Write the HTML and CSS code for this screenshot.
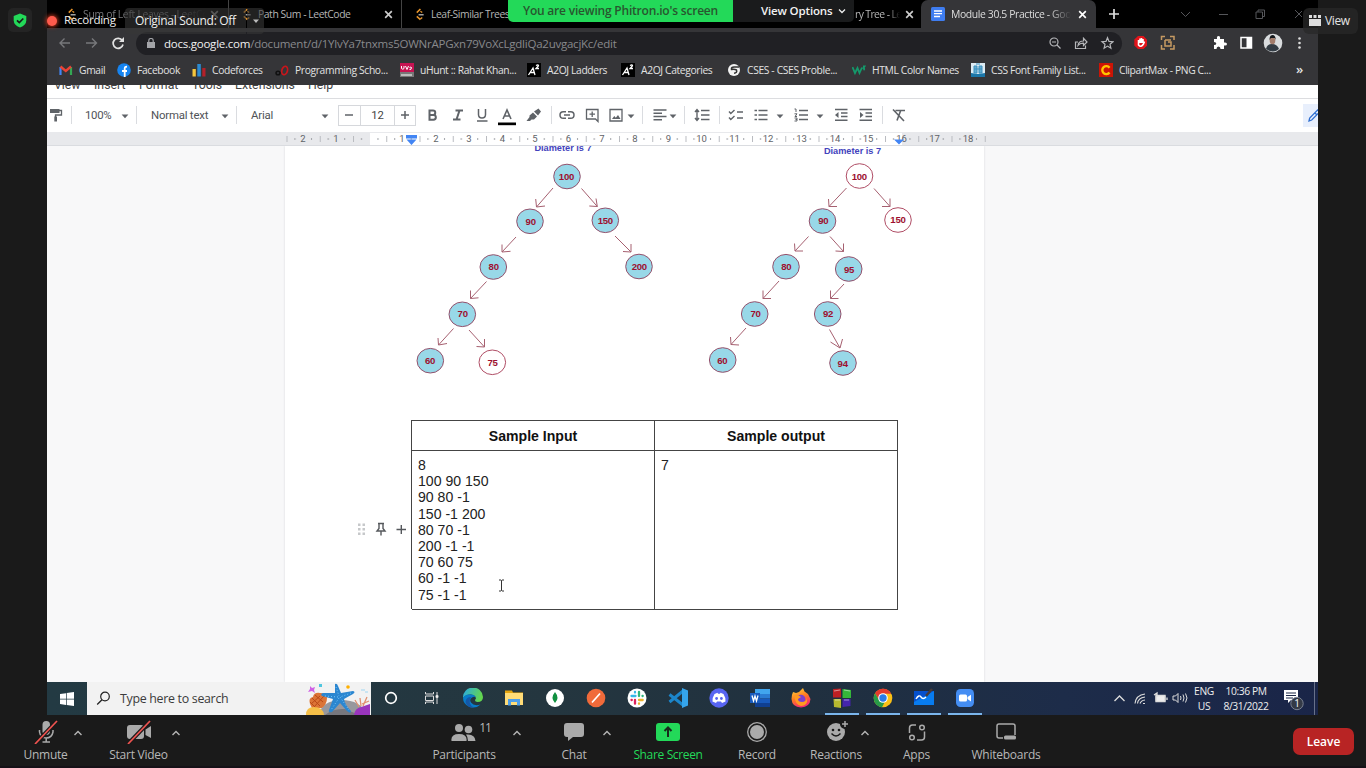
FILE: index.html
```html
<!DOCTYPE html>
<html lang="en">
<head>
<meta charset="utf-8">
<title>Zoom Meeting</title>
<link rel="stylesheet" href="styles.css">
</head>
<body>
<svg class="defs" width="0" height="0">
  <defs>
    <symbol id="close" viewBox="0 0 10 10"><path d="M2 2l6 6M8 2l-6 6" fill="none" stroke="currentColor" stroke-width="1.5"/></symbol>
    <symbol id="leet" viewBox="0 0 12 14"><path d="M7 1L3 5M3 9l4 3.500" fill="none" stroke="#e6942b" stroke-width="1.7"/><path d="M7 3.500l2 1.300M7 12l2-1.800" stroke="#e6942b" stroke-width="1.500"/><path d="M5 7.300h5.500" stroke="#b3b3b3" stroke-width="1.500"/></symbol>
    <symbol id="up" viewBox="0 0 10 8"><path d="M1.500 6L5 2.500 8.500 6" fill="none" stroke="#b5b5b5" stroke-width="1.400"/></symbol>
    <symbol id="caret" viewBox="0 0 8 5"><path d="M.6.5h6.800L4 4.300z" fill="#5f6368"/></symbol>
    <symbol id="a2" viewBox="0 0 14 14"><path fill="#000" d="M0 0h14v14H0z"/><path d="M1.500 12L6 5l2 7M3.500 9.500h4M9 2.500q2.500-1.500 2.500.3L9 5.500h3" fill="none" stroke="#fff" stroke-width="1.300"/></symbol>
  </defs>
</svg>
<div class="meeting">
  <div class="stage">
    <aside class="gutter left"><div class="shield"><svg width="14" height="15" viewBox="0 0 14 15"><path fill="#23d959" d="M7 .5L13.300 3v4.500q0 4.500-6.300 7-6.300-2.500-6.300-7V3z"/><path d="M4 7.300l2.300 2.300L10.300 5.500" fill="none" stroke="#1a1a1a" stroke-width="1.700"/></svg></div></aside>

    <main class="shared">
      <div class="tabs">
        <div class="tab t1"><svg class="leet"><use href="#leet"/></svg><span class="title">Sum of Left Leaves - LeetCo</span><svg class="x"><use href="#close"/></svg></div>
        <div class="tab t2"><svg class="leet"><use href="#leet"/></svg><span class="title">Path Sum - LeetCode</span><svg class="x"><use href="#close"/></svg></div>
        <div class="tab t3"><svg class="leet"><use href="#leet"/></svg><span class="title">Leaf-Similar Trees</span></div>
        <div class="tab t4"><span class="title">ry Tree - Le</span><svg class="x"><use href="#close"/></svg></div>
        <div class="tab active"><svg width="14" height="14" viewBox="0 0 14 14"><rect width="14" height="14" rx="1.500" fill="#3f7df0"/><path d="M3 4h8M3 6.700h8M3 9.500h6" stroke="#fff" stroke-width="1.300"/></svg><span class="title">Module 30.5 Practice - Goo</span><svg class="x"><use href="#close"/></svg></div>
        <svg class="plus" width="12" height="12" viewBox="0 0 12 12"><path d="M6 1v10M1 6h10" stroke="#ddd" stroke-width="1.700"/></svg>
        <svg class="winctl" width="126" height="12" viewBox="0 0 126 12" fill="none" stroke="#55565a"><path d="M5 4l4.500 4.500L14 4M43 6.500h9M80 4h6.500v6.500H80zM82 4V2h6.500v6.500H87M119 2l8 8M127 2l-8 8"/></svg>
      </div>

      <div class="address">
        <svg width="66" height="14" viewBox="0 0 66 14" fill="none" stroke-width="1.400"><path d="M12 7H2M6.500 2.500L2 7l4.500 4.500M28 7h10.500M34 2.500L38.500 7 34 11.500" stroke="#77787b"/><path d="M64.300 4.500A5 5 0 1 0 65 8.500" stroke="#e2e2e2" stroke-width="1.700"/><path fill="#e2e2e2" d="M66 1v5h-5z"/></svg>
        <div class="omnibox">
          <svg width="8" height="10" viewBox="0 0 8 10"><path fill="#a3a4a8" d="M0 4h8v6H0z"/><path d="M1.800 4V2.500a2.200 2 0 0 1 4.400 0V4" fill="none" stroke="#a3a4a8" stroke-width="1.200"/></svg>
          <span class="url"><b>docs.google.com</b>/document/d/1YlvYa7tnxms5OWNrAPGxn79VoXcLgdliQa2uvgacjKc/edit</span>
          <svg width="66" height="14" viewBox="0 0 66 14" fill="none" stroke="#b6b7ba" stroke-width="1.200"><circle cx="6" cy="6" r="4"/><path d="M9 9l3.500 3.500M4 6h4M30 6H27.500v6.500h10V9.500M30 9.500q.5-4.500 5.500-4.500V2.300L39 6l-3.500 3.500V7.200Q32 7 30 9.500z"/><path d="M59.500 1.700l1.500 3.700 4 .3-3 2.600.9 4-3.400-2.200-3.400 2.200.9-4-3-2.600 4-.3z"/></svg>
        </div>
        <svg class="extensions" width="176" height="20" viewBox="0 0 176 20"><path fill="#e0151b" d="M5 3h5.500l3.500 3.700v6L10.500 16H5l-3.700-3.500v-6z"/><path d="M5.500 7v5q2.500 3 5-1l1-2.500M7 10V5.500M8.500 10V5M10 10V6" stroke="#fff" stroke-width="1.600" fill="none"/><path d="M28.500 7V3.500H32M37 3.500h4V7M41 12v4h-4M32 16h-3.500v-4M32 7h6M32 7v6h6V9h-3" fill="none" stroke="#c69a62" stroke-width="1.500"/><path fill="#fff" d="M81 6h3q-.5-3 1.500-3T87 6h4v3.500q3-.5 3 1.500t-3 1.500V16h-3.500q0-2.500-2-2.500t-2 2.500H81v-4q2.300 0 2.300-1.500T81 9z"/><path d="M108 4.500h10.500v10.500H108z" fill="none" stroke="#fff" stroke-width="1.500"/><path fill="#fff" d="M113.500 4.500h5v10.500h-5z"/><circle cx="140" cy="10" r="9.300" fill="#d9dcde"/><path fill="#333c44" d="M133 16q1-5 6-5t7 5q-6 5-13 0z"/><ellipse cx="139.500" cy="7.500" rx="2.800" ry="3.800" fill="#a27c6b"/><path fill="#15191d" d="M136.500 7q0-5 3-5t3.300 5l-1-2h-4z"/><g fill="#ddd"><circle cx="166.500" cy="5.500" r="1.300"/><circle cx="166.500" cy="10" r="1.300"/><circle cx="166.500" cy="14.500" r="1.300"/></g></svg>
      </div>

      <div class="bookmarks">
        <div class="bm b1"><svg viewBox="0 0 14 14"><path d="M1.500 12V4" stroke="#4285f4" stroke-width="2.200"/><path d="M12 12V4" stroke="#34a853" stroke-width="2.200"/><path d="M1.500 3.500L6.800 8 12 3.500" fill="none" stroke="#ea4335" stroke-width="2.400"/></svg>Gmail</div>
        <div class="bm b2"><svg viewBox="0 0 14 14"><circle cx="7" cy="7" r="6.800" fill="#1684f0"/><path d="M7.700 14V5.500q0-2 2.300-1.700M5 8h5" fill="none" stroke="#fff" stroke-width="1.800"/></svg>Facebook</div>
        <div class="bm b3"><svg viewBox="0 0 14 14"><path fill="#f5c63c" d="M.5 6h3.300v7.500H.5z"/><path fill="#2b8bd2" d="M5.300 1h3.500v12.500H5.300z"/><path fill="#b4202a" d="M10.300 5h3.200v8.500h-3.200z"/></svg>Codeforces</div>
        <div class="bm b4"><svg viewBox="0 0 14 14" fill="none"><ellipse cx="3" cy="10" rx="2" ry="1.800" stroke="#111" stroke-width="1.500"/><ellipse cx="9.800" cy="7.500" rx="2.800" ry="4.300" transform="rotate(15 9.800 7)" stroke="#c9151b" stroke-width="1.700"/></svg>Programming Scho...</div>
        <div class="bm b5"><svg viewBox="0 0 14 14"><path fill="#c71352" d="M0 0h14v9H0z"/><path fill="#777" d="M0 9h14v5H0z"/><path d="M1.500 3v2.500q1.500 1.500 2.500 0V3M5.500 3l1.500 3.500L8.500 3M9.500 6.500q2 .5 2-2 0-1-2 0M1 12h11" fill="none" stroke="#fff" stroke-width="1"/></svg>uHunt :: Rahat Khan...</div>
        <div class="bm b6"><svg><use href="#a2"/></svg>A2OJ Ladders</div>
        <div class="bm b7"><svg><use href="#a2"/></svg>A2OJ Categories</div>
        <div class="bm b8"><svg viewBox="0 0 14 14"><circle cx="7" cy="7" r="6" fill="#f3f3f3"/><path d="M12 4H7Q4 4 4.500 6.500q3-.5 5 .5 1 3-2.500 3.300" fill="none" stroke="#333" stroke-width="1.500"/></svg>CSES - CSES Proble...</div>
        <div class="bm b9"><svg viewBox="0 0 14 14"><path d="M.5 4l2.500 6 2.500-5 2 5L10 4.500M11 3.500h1.500l-1 1.500q1.500 1 0 2" fill="none" stroke="#14996b" stroke-width="1.800"/></svg>HTML Color Names</div>
        <div class="bm b10"><svg viewBox="0 0 14 14"><path fill="#dcebf3" d="M0 0h14v14H0z"/><path fill="#1b76a8" d="M0 10l7 1 7-1v4H0z"/><path d="M3 3h3v7H3zM8 3h3v7H8zM3 6h8M5 1h4" fill="#63acd0" stroke="#3c8fbd"/></svg>CSS Font Family List...</div>
        <div class="bm b11"><svg viewBox="0 0 14 14"><path fill="#cc1406" d="M0 0h14v14H0z"/><path d="M10.500 4.700A4 4 0 1 0 10.500 9.500" fill="none" stroke="#ffc400" stroke-width="2.400"/></svg>ClipartMax - PNG C...</div>
        <span class="more">»</span>
      </div>

      <div class="docmenu"><span class="m1">View</span><span class="m2">Insert</span><span class="m3">Format</span><span class="m4">Tools</span><span class="m5">Extensions</span><span class="m6">Help</span></div>

      <div class="toolbar">
        <svg class="ic" viewBox="0 0 16 16"><path fill="#5f6368" d="M3 2h9.500v4H3z"/><path d="M12 3.500h2.500v4.500H8.500V10" fill="none" stroke="#5f6368" stroke-width="1.300"/><path fill="#5f6368" d="M7.300 9.500h2.700v5H7.300z"/></svg>
        <i class="sep g8"></i><span class="txt zoomv">100%</span><svg class="caret g8"><use href="#caret"/></svg>
        <i class="sep g7"></i><span class="txt stylev">Normal text</span><svg class="caret g12"><use href="#caret"/></svg>
        <i class="sep g7"></i><span class="txt fontv">Arial</span><svg class="caret g46"><use href="#caret"/></svg>
        <div class="size"><svg width="21" viewBox="0 0 21 20"><path d="M6 10h8" stroke="#5f6368" stroke-width="1.500"/></svg><span>12</span><svg width="20" viewBox="0 0 20 20"><path d="M6 10h8M10 6v8" stroke="#5f6368" stroke-width="1.500"/></svg></div>
        <svg class="ic g8" viewBox="0 0 16 16"><path d="M5.500 3.500H9a2.200 2.200 0 0 1 0 4.500H5.500zM5.500 8h4a2.300 2.300 0 0 1 0 4.700h-4z" fill="none" stroke="#5f6368" stroke-width="2"/></svg>
        <svg class="ic g10" viewBox="0 0 16 16"><path d="M5.500 3.500H13M3 12.500h7.500M9.500 3.500l-3 9" fill="none" stroke="#5f6368" stroke-width="2"/></svg>
        <svg class="ic g8" viewBox="0 0 16 16"><path d="M4.500 2v5.500q0 3.500 3.500 3.500t3.500-3.500V2M3 14h10.500" fill="none" stroke="#5f6368" stroke-width="1.500"/></svg>
        <svg class="ic wide g8" viewBox="0 0 18 20"><path d="M5 12L9 3l4 9M6.500 9h5" fill="none" stroke="#5f6368" stroke-width="1.600"/><path fill="#000" d="M0 15.500h19v2.700H0z"/></svg>
        <svg class="ic g10" viewBox="0 0 16 16"><path fill="#5f6368" d="M8 4.500l4 4 3-4L12.500 1.500zM7 5.500l4 4-3 3H5.500L4 14H.5l3-4V8.500z"/></svg>
        <i class="sep g9"></i>
        <svg class="ic g7" viewBox="0 0 16 16"><path d="M7 4.700H4.300a3.300 3.300 0 0 0 0 6.600H7M9 4.700h2.700a3.300 3.300 0 0 1 0 6.600H9M5 8h6" fill="none" stroke="#5f6368" stroke-width="1.500"/></svg>
        <svg class="ic g9" viewBox="0 0 16 16"><path d="M2.500 2.500h11.500v12l-2.500-2.500H2.500zM8.200 4.500v5.500M5.500 7.200H11" fill="none" stroke="#5f6368" stroke-width="1.300"/></svg>
        <svg class="ic g8" viewBox="0 0 16 16"><path d="M2 2.500h12v11.500H2z" fill="none" stroke="#5f6368" stroke-width="1.300"/><path fill="#5f6368" d="M4 12l2.300-3 1.500 1.700L10 8l2.500 4z"/></svg>
        <svg class="caret g3"><use href="#caret"/></svg><i class="sep g7"></i>
        <svg class="ic g9" viewBox="0 0 16 16"><path d="M1.500 3h13M1.500 6.200h8.500M1.500 9.500h13M1.500 12.800h8.500" stroke="#5f6368" stroke-width="1.400"/></svg>
        <svg class="caret g1"><use href="#caret"/></svg><i class="sep g7"></i>
        <svg class="ic g9" viewBox="0 0 16 16"><path d="M7 3.500h8.500M7 8h8.500M7 12.500h8.500M3 2.500v11M1 5l2-2.500L5 5M1 11l2 2.500L5 11" fill="none" stroke="#5f6368" stroke-width="1.400"/></svg>
        <i class="sep g9"></i>
        <svg class="ic g8" viewBox="0 0 16 16"><path d="M9 5h6M9 11h6M1 4.500l1.800 2L6.500 3M1 10.500l1.800 2L6.500 9" fill="none" stroke="#5f6368" stroke-width="1.400"/></svg>
        <svg class="ic g9" viewBox="0 0 16 16"><path d="M5.500 3.500h9M5.500 8h9M5.500 12.500h9M1.500 3.500H4M1.500 8H4M1.500 12.500H4" stroke="#5f6368" stroke-width="1.700"/></svg>
        <svg class="caret g7"><use href="#caret"/></svg>
        <svg class="ic g9" viewBox="0 0 16 16"><path d="M6 3.500h9M6 8h9M6 12.500h9" stroke="#5f6368" stroke-width="1.500"/><path d="M1.500 2H3v3M1.500 6.800H4L2 9.500h2M1.500 11H4v3H1.500M2.500 12.500H4" fill="none" stroke="#5f6368"/></svg>
        <svg class="caret g7"><use href="#caret"/></svg>
        <svg class="ic g9" viewBox="0 0 16 16"><path d="M2 2.500h12.500M8 6h6.500M8 9.500h6.500M2 13.200h12.500" stroke="#5f6368" stroke-width="1.400"/><path fill="#5f6368" d="M5.500 5v6L2 8z"/></svg>
        <svg class="ic g9" viewBox="0 0 16 16"><path d="M1.500 2.500H14M7.500 6H14M7.500 9.500H14M1.500 13.200H14" stroke="#5f6368" stroke-width="1.400"/><path fill="#5f6368" d="M2 5v6l3.500-3z"/></svg>
        <i class="sep g8"></i>
        <svg class="ic g8" viewBox="0 0 16 16"><path d="M4.500 3.500H14M9.500 4L6 13.500M2 2.500l11 11.500" fill="none" stroke="#5f6368" stroke-width="1.600"/></svg>
        <div class="editmode"><svg width="15" height="23" viewBox="0 0 15 23"><path d="M6 17l.7-3 8-8 2 2-8 8zM12 9l2 2" fill="none" stroke="#2f6fd0" stroke-width="1.300"/></svg></div>
      </div>

      <div class="ruler">
        <svg width="1271" height="14" viewBox="47 132 1271 14">
          <defs><pattern id="ticks" x="286.500" y="132" width="33.250" height="14" patternUnits="userSpaceOnUse"><path d="M.5 4v6" stroke="#b9bbc0"/><path d="M8.500 6v2M25 6v2" stroke="#a0a2a7"/></pattern></defs>
          <path fill="#fff" d="M370 133h532v12H370z"/><path fill="url(#ticks)" d="M286 132h700v14H286z"/>
          <g class="nums"><text x="303" y="142">2</text><text x="336" y="142">1</text><text x="402" y="142">1</text><text x="436" y="142">2</text><text x="469" y="142">3</text><text x="502.500" y="142">4</text><text x="535" y="142">5</text><text x="568.500" y="142">6</text><text x="602" y="142">7</text><text x="635" y="142">8</text><text x="668.500" y="142">9</text><text x="701.500" y="142">10</text><text x="734.500" y="142">11</text><text x="768" y="142">12</text><text x="801.500" y="142">13</text><text x="835" y="142">14</text><text x="868" y="142">15</text><text x="901.500" y="142">16</text><text x="934.500" y="142">17</text><text x="968" y="142">18</text></g>
          <path fill="#4285f4" d="M406 135h11v3.500h-11zM406.500 139.500h10L411.500 145zM894 139.500h10l-5 5z"/>
        </svg>
      </div>

      <div class="canvas">
        <div class="page">
          <svg class="trees" width="699" height="274" viewBox="285 146 699 274">
            <g class="caption"><text x="563" y="151">Diameter is 7</text><text x="852.500" y="154">Diameter is 7</text></g>
            <g class="arrows">
              <path d="M553 188l-16.500 19m-.8-8l.8 8 8.500-1M581.500 188.500l15.800 18m-1.300-8l1.300 8-8-.5M516 237l-14 15m0-7.500v7.500l8.500-.7M615 236l16 16m0-8v8l-8-.5M486.500 281.500l-16 17m0-8v8l8-.7M453.500 328.500l-15 16.500m-.5-7l.5 7 8.500-1.500M469 330l15.500 17m0-8v8l-8-.5"/>
              <path d="M846.500 188l-17.500 18.500m-.5-7.500l.5 7.500h8M874 188.500l16 18m0-8v8h-8M808.500 236.500L795 251m-.5-7.500l.5 7.500h8M830 236.500l13.500 15m0-8v8l-8-.5M779 281l-16 17.500m0-8v8h8M844 284l-13.500 14.500m0-8v8h8M746 328l-15 16.500m-.5-7.500l.5 7.500 8 .5M829.500 329.500l10.500 18.500m-9.500-6l9.500 6 2.500-9"/>
            </g>
            <g class="nodes">
              <ellipse cx="567" cy="176.500" rx="13.300" ry="12.300"/><ellipse cx="530" cy="221.300" rx="13.300" ry="12.300"/><ellipse cx="605.300" cy="220.300" rx="13.300" ry="12.300"/><ellipse cx="493.300" cy="267" rx="13.300" ry="12.300"/><ellipse cx="639" cy="266.500" rx="13.300" ry="12.300"/><ellipse cx="462.300" cy="314.300" rx="13.300" ry="12.300"/><ellipse cx="430.300" cy="360.700" rx="13.300" ry="12.300"/><ellipse class="open" cx="492.300" cy="362.300" rx="13.300" ry="12.300"/>
              <ellipse class="open" cx="859.500" cy="176" rx="13.300" ry="12.300"/><ellipse cx="822.500" cy="221" rx="13.300" ry="12.300"/><ellipse class="open" cx="898" cy="220" rx="13.300" ry="12.300"/><ellipse cx="786" cy="266.700" rx="13.300" ry="12.300"/><ellipse cx="848.700" cy="269" rx="13.300" ry="12.300"/><ellipse cx="754.700" cy="314" rx="13.300" ry="12.300"/><ellipse cx="827.700" cy="314" rx="13.300" ry="12.300"/><ellipse cx="722.700" cy="360" rx="13.300" ry="12.300"/><ellipse cx="843" cy="363" rx="13.300" ry="12.300"/>
              <text x="566.500" y="180">100</text><text x="530.700" y="224.500">90</text><text x="605.300" y="224">150</text><text x="493.700" y="270">80</text><text x="639.300" y="269.700">200</text><text x="462.700" y="317">70</text><text x="430" y="364">60</text><text x="492.500" y="365.500">75</text>
              <text x="859.300" y="179.500">100</text><text x="823.300" y="224">90</text><text x="898" y="223.300">150</text><text x="786.300" y="269.700">80</text><text x="849" y="272.500">95</text><text x="755.500" y="316.500">70</text><text x="828" y="316.500">92</text><text x="722.300" y="363.500">60</text><text x="842.700" y="366.500">94</text>
            </g>
          </svg>
          <div class="sample">
            <div class="cell head">Sample Input</div><div class="cell head">Sample output</div>
            <div class="cell">8<br>100 90 150<br>90 80 -1<br>150 -1 200<br>80 70 -1<br>200 -1 -1<br>70 60 75<br>60 -1 -1<br>75 -1 -1</div><div class="cell">7</div>
          </div>
          <svg class="rowtools" width="50" height="16" viewBox="0 0 50 16"><g fill="#c6c8ca"><path d="M1 2.500h2.500V5H1zM5.500 2.500H8V5H5.500zM1 7h2.500v2.500H1zM5.500 7H8v2.500H5.500zM1 11.500h2.500V14H1zM5.500 11.500H8V14H5.500z"/></g><path d="M21 2.500h6M22 2.500v5l-2 2.500h8l-2-2.500v-5M24 10v4.500M39.500 8.500h9.500M44.300 4v9" fill="none" stroke="#55585c" stroke-width="1.400"/></svg>
          <svg class="ibeam" width="7" height="13" viewBox="0 0 7 13"><path d="M1 1h2l.5.500L4 1h2M3.500 1.500v10M1 12h2l.5-.5.5.5h2" fill="none" stroke="#333"/></svg>
        </div>
      </div>

      <div class="taskbar">
        <div class="start"><svg width="14" height="14" viewBox="0 0 14 14"><path fill="#fff" d="M0 2l6-.8v5.500H0zM6.700 1.100L14 0v6.700H6.700zM0 7.400h6v5.500L0 12zM6.700 7.400H14V14l-7.300-1z"/></svg></div>
        <div class="search"><svg width="15" height="15" viewBox="0 0 15 15"><circle cx="9" cy="5.500" r="4.300" fill="none" stroke="#222" stroke-width="1.200"/><path d="M6 8.800L1.200 13.500" stroke="#222" stroke-width="1.300"/></svg><span>Type here to search</span>
          <svg class="reef" width="66" height="33" viewBox="0 0 66 33"><path fill="#98989d" d="M14 33q2-14 22-15 20 0 26 15z"/><path fill="#77777d" d="M20 33q8-7 20-6l14 6z"/><path fill="#dc7436" d="M5 22q-2-6 3-7 1-5 7-4 7 0 7 5 0 6-5 10H7z"/><path d="M7 16l8 8M10 13l8 7M5 20l6 6M15 14L6 22M19 14L9 25" stroke="#b94a17"/><path fill="#f5bf48" d="M1 33q0-8 8-8 9 0 10 8z"/><path fill="#9a35bd" d="M49 33q1-7 7-8l9-3v11z"/><path d="M54 25l-4-7M56 24l-1-8M58 24l4-9M57 22l7-3" stroke="#e09070" stroke-width="1.300" fill="none"/><path fill="#2b86d0" d="M30 2q2-1 3 2l3 7 12-2q3 1 0 3l-9 5q1 6 7 12 0 3-4 0l-7-8-8 9q-4 1-3-2l4-11-11-3q-2-2 1-3l12 0z"/><path d="M31 5l3 9M46 11l-11 4 9 13M34 16l-8 12M33 15l-13-1" stroke="#73c5fa" stroke-dasharray="1 2" fill="none"/><path fill="#cf62e4" d="M5 4l2 2 3-1-1 3 1 3-3-2-4 1 2-3z"/><path fill="#4fc6df" d="M14 2h3v3h-3z"/><circle cx="43" cy="5" r="1.800" fill="#ffb000"/><path fill="#c8e4f2" d="M56 7h4v2h-4zM60 9h3v2h-3z"/></svg>
        </div>
        <div class="app"><svg viewBox="0 0 20 20"><circle cx="10" cy="10" r="5.300" fill="none" stroke="#fff" stroke-width="1.700"/></svg></div>
        <div class="app"><svg viewBox="0 0 20 20" fill="none" stroke="#ddd"><path d="M3.500 4v2h8V4M3.500 16v-2h8v2M3.500 8h8v4.500h-8zM15 4v3M15 10v6"/><path d="M14 7.500h2v2h-2z" fill="#fff"/></svg></div>
        <div class="app"><svg viewBox="0 0 20 20"><defs><linearGradient id="edge1" x2="1" y2=".3"><stop stop-color="#28a8e8"/><stop offset="1" stop-color="#62d64f"/></linearGradient></defs><path fill="url(#edge1)" d="M0 10A10 10 0 0 1 20 9q0 5-5.500 5-4-.5-1.500-3.500Q12.500 7 8 6.500 3 6 0 10z"/><path fill="#087cc9" d="M0 10q2-4 7-3.500Q12 6 13 10q-1-2-4-.5-3 2-1 5 3 4 9.500 2Q13 21 6.500 19 0 16 0 10z"/><path fill="#1557a6" d="M8 9q-4 7 3 10.500Q4 20 2.500 14 3 9 8 9z"/></svg></div>
        <div class="app"><svg viewBox="0 0 20 20"><path fill="#e5a50f" d="M1 2.500h7l1 2h10v3H1z"/><path fill="#ffdc77" d="M1 5h18v12H1z"/><path fill="#4e9ee8" d="M4 11h12v6.500h-3V14H7v3.500H4z"/></svg></div>
        <div class="app"><svg viewBox="0 0 20 20"><circle cx="10" cy="10" r="9" fill="#fff"/><path fill="#10903f" d="M10 4q5 6 0 11-5-5 0-11z"/></svg></div>
        <div class="app"><svg viewBox="0 0 20 20"><circle cx="10" cy="10" r="9.300" fill="#f06a3a"/><path d="M6 14.500l8-9" stroke="#fff" stroke-width="1.700"/></svg></div>
        <div class="app"><svg viewBox="0 0 20 20"><circle cx="10" cy="10" r="9.500" fill="#fff"/><g fill="none" stroke-width="2.300" stroke-linecap="round"><path d="M4.500 8h4M8 4v.5" stroke="#36b8e8"/><path d="M12 4v4M15.500 8h.2" stroke="#2fb67d"/><path d="M12 12h3.700M12 15.500v.3" stroke="#ecb32e"/><path d="M8 12v3.700M4.500 12h.3" stroke="#dc235a"/></g></svg></div>
        <div class="app"><svg viewBox="0 0 20 20"><path d="M15 3L1.500 14M15 17L1.500 6.500" stroke="#1c86cb" stroke-width="3"/><path fill="#35a5ec" d="M14 0l6 2.500v15L14 20z"/></svg></div>
        <div class="app"><svg viewBox="0 0 20 20"><circle cx="10" cy="10" r="9.700" fill="#5865f2"/><path fill="#fff" d="M5.500 6l3-1.200.5 1h2l.5-1 3 1.200Q17 10 16.500 13.500L13 15l-1-1.500H8L7 15l-3.500-1.500Q3 10 5.500 6z"/><circle cx="7.600" cy="10.500" r="1.400" fill="#5865f2"/><circle cx="12.400" cy="10.500" r="1.400" fill="#5865f2"/></svg></div>
        <div class="app"><svg viewBox="0 0 20 20"><path fill="#41a5ee" d="M5 1h15v5H5z"/><path fill="#2b7cd3" d="M5 6h15v4.500H5z"/><path fill="#185abd" d="M5 10.500h15V15H5z"/><path fill="#103f91" d="M5 15h15v4H5z"/><path fill="#185abd" d="M0 5h10v10H0z"/><path d="M2 7.500L3.500 13 5 8l1.500 5L8 7.500" fill="none" stroke="#fff" stroke-width="1.300"/></svg></div>
        <div class="app"><svg viewBox="0 0 20 20"><defs><linearGradient id="fox" x2=".4" y2="1"><stop stop-color="#ffe03d"/><stop offset=".55" stop-color="#ff7b22"/><stop offset="1" stop-color="#f52c70"/></linearGradient></defs><path fill="url(#fox)" d="M2 4l3 1 3-1 4-4 1.500 3.500L17 6l2.500 5Q19 19 10 19.500 1 19 .5 11 .5 7 2 4z"/><circle cx="10" cy="11" r="4.300" fill="#7940cf"/><path fill="#ff9a21" d="M3 7q5 0 7 2l-3 2q0 3 4 3 4 0 5-4 1 8-6 8-6-1-7-11z"/></svg></div>
        <div class="app open"><svg viewBox="0 0 20 20"><path fill="#bd2023" d="M1 1l8-.5v9H1z"/><path fill="#35b73a" d="M10.500 1L19 2v8h-8.500z"/><path fill="#b7b82f" d="M1.500 11H9v9l-7-1z"/><path fill="#4525ac" d="M10.500 11H18.500v7l-8 1z"/><path d="M2 3l6-1M12 2l6 1M3 12h5M12 12h5" stroke="#fff" stroke-opacity=".5"/></svg></div>
        <div class="app open"><svg viewBox="0 0 20 20"><circle cx="10" cy="10" r="9.300" fill="#fbc116"/><path fill="#e33b2e" d="M2 5.300A9.300 9.300 0 0 1 18.200 5.700H10L6 12z"/><path fill="#289b48" d="M2 5.300L6 12l5.500 2.500L9 19.300A9.300 9.300 0 0 1 2 5.300z"/><circle cx="10" cy="10" r="4.800" fill="#fff"/><circle cx="10" cy="10" r="3.700" fill="#297be8"/></svg></div>
        <div class="app open"><svg viewBox="0 0 20 20"><path fill="#087cf0" d="M0 3h20v14H0z"/><path fill="#0550cd" d="M0 3h20L0 14z"/><path d="M2 11q3-5 5-2t5 0" fill="none" stroke="#fff" stroke-width="1.400"/><path d="M12 8l6-7" stroke="#483b39" stroke-width="2.500"/></svg></div>
        <div class="app open"><svg viewBox="0 0 20 20"><rect x="1" y="1" width="18" height="18" rx="4.500" fill="#448df3"/><rect x="4" y="6.500" width="8" height="7" rx="1.500" fill="#fff"/><path fill="#fff" d="M12.500 9l3.500-2.300v6.700L12.500 11z"/></svg></div>
        <svg class="trayicons" width="76" height="16" viewBox="0 0 76 16" fill="none" stroke="#ddd"><path d="M1.500 11L6.500 6l5 5" stroke-width="1.300"/><path d="M22 13.500Q23 5 32 4M24.500 13.500Q25 8 32 7M27 13.500Q28 10.500 32 10M30 13.500h2" stroke-width="1.100"/><path d="M43 5.500h9v6h-9z" fill="#eee"/><path d="M43 5.500h9v6h-9zM54 7.500v2.500M41 5l3-2v4" stroke-width="1.300"/><path d="M60 6h2.500L65 3.500v9L62.500 10H60zM67.500 6q1 2 0 4M70 4.500q2 3.500 0 7M72.500 3.500q3 4.500 0 9"/></svg>
        <div class="lang">ENG<br>US</div><div class="clock">10:36 PM<br>8/31/2022</div>
        <div class="notice"><svg width="22" height="24" viewBox="0 0 22 24"><path fill="#fff" d="M1 2h14v10H8l-3 3v-3H1z"/><path d="M3 5h10M3 7.500h10M3 10h7" stroke="#1d2947"/><circle cx="14" cy="15.500" r="6.200" fill="#343a46" stroke="#788091"/><text x="14" y="19">1</text></svg></div>
        <i class="peek"></i>
      </div>

      <div class="sharebanner"><div class="viewing">You are viewing Phitron.io's screen</div><div class="options">View Options<svg width="8" height="6" viewBox="0 0 8 6"><path d="M1 1.500l3 3 3-3" fill="none" stroke="#eee" stroke-width="1.300"/></svg></div></div>
      <div class="status"><i class="recdot"></i><span class="rec">Recording</span><span class="sound">Original Sound: Off</span><span class="soundmenu"><svg width="8" height="5" viewBox="0 0 8 5"><path fill="#bbb" d="M1 .5h6L4 4z"/></svg></span></div>
    </main>

    <aside class="gutter"><div class="view"><svg width="12" height="11" viewBox="0 0 12 11"><path fill="#ddd" d="M0 4h12v7H0z"/><path fill="#ddd" d="M0 0h3v3H0zM4.500 0h3v3h-3zM9 0h3v3H9z"/></svg>View</div></aside>
  </div>

  <footer class="controls">
    <div class="ctl unmute"><svg width="24" height="24" viewBox="0 0 24 24"><rect x="8.500" y="1" width="7.500" height="14" rx="3.700" fill="#aaa"/><path d="M5.500 10v2q1 6 6.700 6T19 12v-2M12.200 18v3.500M8.500 22h7.500" fill="none" stroke="#aaa" stroke-width="1.500"/><path d="M1 24L23 1" stroke="#1a1a1a" stroke-width="4"/><path d="M1 24L23 1" stroke="#ef5350" stroke-width="1.700"/></svg><span>Unmute</span></div><svg class="up u1"><use href="#up"/></svg>
    <div class="ctl video"><svg width="26" height="24" viewBox="0 0 26 24"><rect x="1" y="5" width="17" height="14" rx="3" fill="#aaa"/><path fill="#aaa" d="M19.500 9.500L25 6v12l-5.500-3z"/><path d="M2 24L24 1" stroke="#1a1a1a" stroke-width="4"/><path d="M2 24L24 1" stroke="#ef5350" stroke-width="1.700"/></svg><span>Start Video</span></div><svg class="up u2"><use href="#up"/></svg>
    <div class="ctl people"><div class="peopleicon"><svg width="25" height="24" viewBox="0 0 25 24" fill="#aaa"><circle cx="8" cy="8" r="4"/><circle cx="17.500" cy="9.500" r="3.800"/><path d="M.5 21q-1-7 7.500-7t7.500 7z"/><path d="M15 14.500q9-1 9.500 6.500h-7.500q0-4-2-6.500z"/></svg><span>11</span></div><span>Participants</span></div><svg class="up u3"><use href="#up"/></svg>
    <div class="ctl chat"><svg width="22" height="24" viewBox="0 0 22 24"><path fill="#aaa" d="M4 3h14q3 0 3 3v8q0 3-3 3h-8l-5 4v-4H4q-3 0-3-3V6q0-3 3-3z"/></svg><span>Chat</span></div><svg class="up u4"><use href="#up"/></svg>
    <div class="ctl share"><svg width="24" height="24" viewBox="0 0 24 24"><rect y="3" width="24" height="18" rx="3" fill="#23d959"/><path d="M12 17V8M8.500 11L12 7.500l3.500 3.500" fill="none" stroke="#182b1c" stroke-width="2"/></svg><span>Share Screen</span></div>
    <div class="ctl record"><svg width="22" height="24" viewBox="0 0 22 24"><circle cx="11" cy="12" r="9.300" fill="none" stroke="#aaa" stroke-width="1.300"/><circle cx="11" cy="12" r="7" fill="#aaa"/></svg><span>Record</span></div>
    <div class="ctl react"><svg width="24" height="24" viewBox="0 0 24 24"><circle cx="12" cy="12" r="9" fill="#aaa"/><circle cx="21" cy="4" r="5" fill="#1a1a1a"/><path d="M21 1v6M18 4h6" stroke="#aaa" stroke-width="1.500"/><g fill="#1a1a1a"><circle cx="9" cy="10" r="1.300"/><circle cx="15" cy="10" r="1.300"/></g><path d="M7.500 13.500q4.500 5 9 0" fill="none" stroke="#1a1a1a" stroke-width="1.400"/></svg><span>Reactions</span></div><svg class="up u5"><use href="#up"/></svg>
    <div class="ctl apps"><svg width="20" height="24" viewBox="0 0 20 24" fill="none" stroke="#aaa" stroke-width="1.500"><path d="M2.500 13V8q0-3 3-3H9M17.500 11.500V17q0 3-3 3H10"/><circle cx="15" cy="7.500" r="2.300"/><circle cx="5" cy="17.500" r="2.300"/></svg><span>Apps</span></div>
    <div class="ctl boards"><svg width="22" height="24" viewBox="0 0 22 24"><path d="M8 18H4q-2 0-2-2V6q0-2 2-2h14q2 0 2 2v9" fill="none" stroke="#aaa" stroke-width="1.500"/><rect x="9" y="15.500" width="12" height="4" rx="1.500" fill="#aaa"/></svg><span>Whiteboards</span></div>
    <button class="leave">Leave</button>
  </footer>
</div>
</body>
</html>
```
FILE: styles.css
```css
* { box-sizing: border-box; }
body { margin: 0; background: #1a1a1a; overflow: hidden; font-family: "Open Sans", "Noto Sans", sans-serif; }
svg { flex: none; display: block; }
.defs { position: absolute; }
.meeting { width: 1366px; height: 768px; display: flex; flex-direction: column; }
.stage { height: 715px; display: flex; }
.gutter { width: 48px; flex: none; position: relative; }
.gutter.left { width: 47px; padding: 8px; }
.shield { width: 24px; height: 24px; border-radius: 5px; background: #242424; display: flex; align-items: center; justify-content: center; }
.view { position: absolute; left: -15px; top: 8px; width: 55px; height: 26px; border-radius: 6px; background: rgba(40,40,40,.75); color: #e4e4e4; display: flex; align-items: center; gap: 4px; padding: 0 0 2px 6px; font-size: 12px; letter-spacing: -.4px; }
.shared { width: 1271px; flex: none; position: relative; display: flex; flex-direction: column; }

/* Browser chrome */
.tabs { height: 28px; background: #000; display: flex; align-items: center; color: #b5b5b5; font-size: 10.4px; letter-spacing: -.45px; }
.tab { display: flex; align-items: center; height: 28px; flex: none; white-space: nowrap; }
.tab .leet { width: 11px; height: 13px; }
.tab .x { width: 11px; height: 11px; color: #ccc; }
.title { overflow: hidden; margin-left: 6px; }
.t1 { width: 182px; padding-left: 19px; border-right: 1px solid #444; color: #77787b; }
.t1 .title { width: 123px; letter-spacing: -.3px; mask-image: linear-gradient(90deg,#000 75%,transparent); }
.t1 .x { margin-left: 3px; color: #888; }
.t2 { width: 173px; padding-left: 12px; border-right: 1px solid #444; }
.t2 .title { width: 120px; }
.t2 .x { margin-left: 5px; }
.t3 { width: 453px; padding-left: 12px; }
.t4 { width: 66px; }
.t4 .title { margin: 0; width: 45px; letter-spacing: -.6px; mask-image: linear-gradient(90deg,#000 75%,transparent); }
.t4 .x { margin-left: 4px; }
.tab.active { width: 175px; background: #353538; border-radius: 7px 7px 0 0; padding-left: 10px; color: #ddd; }
.active .title { width: 120px; margin-left: 6px; letter-spacing: -.38px; mask-image: linear-gradient(90deg,#000 82%,transparent); }
.active .x { margin-left: 6px; color: #fff; }
.plus { margin-left: 12px; }
.winctl { margin-left: 56px; }
.address { height: 30px; background: #353538; display: flex; align-items: center; padding-left: 11px; flex: none; }
.omnibox { width: 986px; height: 23px; border-radius: 12px; margin-left: 12px; padding-left: 11px; background: #202024; display: flex; align-items: center; flex: none; }
.url { margin-left: 9px; width: 875px; flex: none; font-size: 11.5px; letter-spacing: -.24px; color: #88898c; white-space: nowrap; }
.url b { font-weight: 400; color: #f0f0f0; }
.omnibox svg:last-child { margin-left: 9px; }
.extensions { margin-left: 11px; }
.bookmarks { height: 27px; background: #353538; display: flex; align-items: center; padding: 0 0 3px 12px; color: #e2e2e2; font-size: 10.3px; letter-spacing: -.36px; flex: none; }
.bm { display: flex; align-items: center; gap: 6px; flex: none; white-space: nowrap; }
.bm svg { width: 14px; height: 14px; }
.b1 { width: 58px; } .b2 { width: 75px; } .b3 { width: 83px; } .b4 { width: 125px; } .b5 { width: 127px; } .b6 { width: 94px; } .b7 { width: 106px; } .b8 { width: 125px; } .b9 { width: 119px; } .b10 { width: 128px; } .b11 { width: 197px; }
.more { font-size: 13px; font-weight: 600; margin-top: -3px; }

/* Document editor */
.docmenu { height: 13px; flex: none; background: #fff; overflow: hidden; display: flex; font: 12.3px/14px Roboto, sans-serif; color: #444; padding-left: 7px; white-space: nowrap; }
.docmenu span { margin-top: -7.5px; }
.m1 { width: 40px; } .m2 { width: 45px; } .m3 { width: 53px; } .m4 { width: 43px; } .m5 { width: 73px; }
.toolbar { height: 34px; background: #fff; border-top: 1px solid #dcdde0; display: flex; align-items: center; flex: none; padding-bottom: 1px; }
.ic { width: 16px; height: 16px; }
.ic.wide { width: 18px; height: 20px; margin-top: 4px; }
.caret { width: 8px; height: 5px; margin-top: 2px; }
.sep { width: 1px; height: 18px; background: #dadce0; }
.g1 { margin-left: 1px; } .g3 { margin-left: 3px; } .g7 { margin-left: 7px; } .g8 { margin-left: 8px; } .g9 { margin-left: 9px; } .g10 { margin-left: 10px; } .g12 { margin-left: 12px; } .g46 { margin-left: 46px; }
.txt { font: 11.4px Roboto, sans-serif; color: #505357; white-space: nowrap; }
.zoomv { margin-left: 13px; width: 28px; letter-spacing: -.3px; }
.stylev { margin-left: 14px; width: 58px; letter-spacing: -.2px; }
.fontv { margin-left: 14px; width: 24px; letter-spacing: -.2px; }
.size { width: 78px; height: 21px; margin-left: 9px; border: 1px solid #d6d8dc; display: flex; align-items: center; }
.size span { width: 36px; height: 19px; border: solid #d6d8dc; border-width: 0 1px; text-align: center; font: 11.3px/19px Roboto, sans-serif; color: #444; }
.size svg { height: 20px; }
.editmode { margin-left: auto; width: 15px; height: 23px; background: #e8effc; }
.ruler { height: 14px; flex: none; background: #e8e9ec; border-bottom: 1px solid #dadce0; overflow: hidden; }
.nums { font: 9.5px Roboto, sans-serif; fill: #5f6368; text-anchor: middle; }
.canvas { height: 536px; background: #f8f8f9; padding-left: 238px; }
.page { width: 699px; height: 536px; background: #fff; box-shadow: 0 0 2px #d5d7da; position: relative; clip-path: inset(0 -3px); }
.caption { font: bold 9.2px "Liberation Sans", Arial, sans-serif; fill: #4343bd; text-anchor: middle; }
.arrows { fill: none; stroke: #a66070; stroke-width: 1; }
.nodes ellipse { fill: #98d8e8; stroke: #94516c; stroke-width: 1; }
.nodes .open { fill: #fff; stroke: #b04e66; }
.nodes text { font: bold 9.6px "Liberation Sans", Arial, sans-serif; letter-spacing: -.25px; fill: #9e102f; text-anchor: middle; }
.sample { width: 486px; height: 189px; margin-left: 126.5px; display: grid; grid-template: 30px 159px / 243px 243px; border: solid #444; border-width: 1px 0 0 1px; font: 14.1px/16.2px "Liberation Sans", Arial, sans-serif; color: #222; }
.page .sample { margin-left: 126px; width: 487px; }
.cell { border: solid #444; border-width: 0 1px 1px 0; padding: 6px 6px; }
.head { font-weight: 700; text-align: center; color: #111; padding-top: 7px; }
.rowtools { position: absolute; left: 72px; top: 375px; }
.ibeam { position: absolute; left: 213px; top: 433px; }

/* Windows taskbar */
.taskbar { height: 33px; background: linear-gradient(90deg,#233a43 0%,#24363f 40%,#20303f 60%,#1d2c49 80%,#1a2548); display: flex; align-items: center; color: #eee; flex: none; }
.start { width: 40px; padding-left: 13px; }
.search { width: 284px; height: 33px; background: #f2f2f2; color: #3b3b3b; display: flex; align-items: center; padding-left: 9px; font-size: 12.4px; letter-spacing: -.3px; flex: none; }
.search span { margin-left: 9px; width: 185px; }
.app { width: 41px; height: 33px; display: flex; align-items: center; justify-content: center; flex: none; padding: 0 1px 1px 0; }
.app svg { width: 20px; height: 20px; }
.app.open { background: linear-gradient(#7ab5ec,#7ab5ec) left 3px bottom / 34px 2px no-repeat; }
.trayicons { margin: 0 0 1px 127px; }
.lang, .clock { font-size: 10.3px; line-height: 15px; text-align: center; letter-spacing: -.4px; white-space: nowrap; flex: none; }
.lang { width: 24px; margin-left: 3px; }
.clock { width: 50px; margin-left: 5px; }
.notice { margin-left: 12px; padding-top: 3px; }
.notice text { font: 10px "Open Sans", sans-serif; fill: #fff; text-anchor: middle; }
.peek { width: 1px; height: 33px; background: #68718a; margin-left: 9px; }

/* Meeting overlays */
.sharebanner { position: absolute; left: 461px; top: 0; width: 346px; height: 22px; display: flex; font-size: 12px; font-weight: 600; line-height: 22px; white-space: nowrap; border-radius: 0 0 5px 5px; overflow: hidden; }
.viewing { width: 225px; background: #23d959; color: #28562f; text-align: center; letter-spacing: -.2px; }
.options { flex: 1; background: #1a1b1c; color: #f2f2f2; display: flex; align-items: center; padding-left: 28px; gap: 6px; font-size: 11.5px; letter-spacing: -.15px; }
.status { position: absolute; left: 0; top: 8px; height: 26px; display: flex; align-items: center; color: #eee; font-size: 12px; letter-spacing: -.3px; white-space: nowrap; }
.recdot { width: 10px; height: 10px; border-radius: 50%; background: #ff5b4d; box-shadow: 0 0 4px 1px #c53820; margin-top: -1px; }
.rec { width: 61px; margin: -3px 0 0 7px; font-size: 11.6px; }
.sound { width: 121px; height: 26px; line-height: 25px; padding-left: 10px; background: rgba(55,55,55,.6); border-radius: 4px 0 0 4px; }
.soundmenu { width: 17px; height: 26px; margin-left: 1px; background: rgba(55,55,55,.6); display: flex; align-items: center; justify-content: center; border-radius: 0 4px 4px 0; }

/* Meeting controls */
.controls { height: 53px; display: flex; border-bottom: 2px solid #151117; color: #b8b8b8; font-size: 12px; letter-spacing: -.25px; }
.ctl { display: flex; flex-direction: column; align-items: center; padding-top: 5px; white-space: nowrap; flex: none; line-height: 17px; }
.ctl > span { margin-top: 2px; }
.up { width: 10px; height: 8px; margin-top: 14px; }
.unmute { width: 47px; margin-left: 22px; } .u1 { margin-left: 4px; }
.video { width: 61px; margin-left: 25px; } .u2 { margin-left: 2px; }
.people { width: 64px; margin-left: 251px; } .u3 { margin-left: 16px; }
.peopleicon { display: flex; gap: 3px; margin-left: 14px; height: 24px; letter-spacing: -1px; }
.peopleicon span { margin-top: -1px; }
.chat { width: 30px; margin-left: 37px; } .u4 { margin-left: 13px; }
.share { width: 72px; margin-left: 20px; color: #23d959; letter-spacing: -.35px; }
.record { width: 40px; margin-left: 33px; }
.react { width: 54px; margin-left: 32px; } .u5 { margin-left: -3px; }
.apps { width: 29px; margin-left: 32px; }
.boards { width: 70px; margin-left: 40px; }
.leave { width: 61px; height: 27px; margin: 13px 12px 0 auto; border: 0; border-radius: 7px; background: #b82424; color: #fff; font: 600 12px "Open Sans", sans-serif; padding: 0; }
```
